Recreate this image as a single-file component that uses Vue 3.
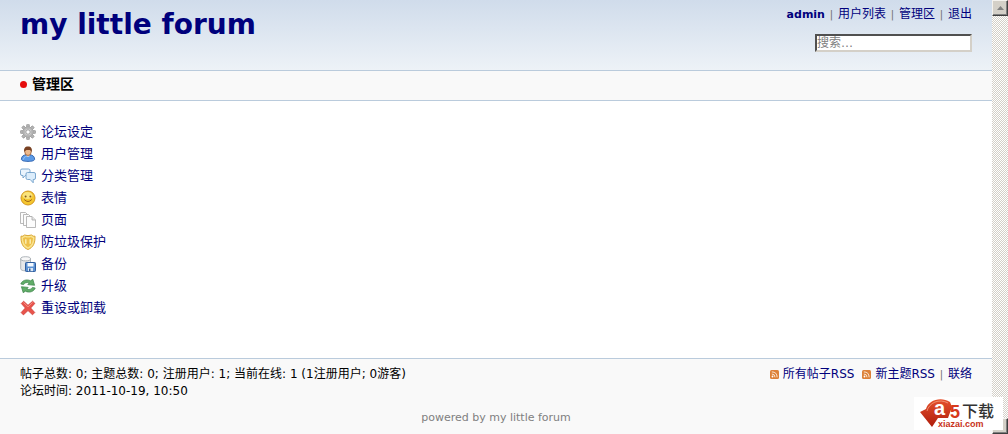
<script setup>
import { ref } from 'vue'

const search = ref('')
const menu = [
  { icon: 'gear', label: '论坛设定' },
  { icon: 'user', label: '用户管理' },
  { icon: 'chat', label: '分类管理' },
  { icon: 'smile', label: '表情' },
  { icon: 'pages', label: '页面' },
  { icon: 'shield', label: '防垃圾保护' },
  { icon: 'backup', label: '备份' },
  { icon: 'update', label: '升级' },
  { icon: 'cross', label: '重设或卸载' },
]
const feeds = ['所有帖子RSS', '新主题RSS']
const teeth = [0, 45, 90, 135, 180, 225, 270, 315]
</script>

<template>
  <div class="window">
    <div class="page">
      <header class="top">
        <h1><a href="#">my little forum</a></h1>
        <div class="tools">
          <nav class="usernav">
            <a href="#" class="me">admin</a><i>|</i><a href="#">用户列表</a><i>|</i><a href="#">管理区</a><i>|</i><a href="#">退出</a>
          </nav>
          <form @submit.prevent>
            <input v-model="search" type="text" placeholder="搜索…" aria-label="搜索" />
          </form>
        </div>
      </header>

      <div class="subnav">
        <span class="dot"></span>
        <h2>管理区</h2>
      </div>

      <main>
        <ul class="menu">
          <li v-for="item in menu" :key="item.icon">
            <a href="#">
              <svg viewBox="0 0 16 16" width="16" height="16" aria-hidden="true">
                <g v-if="item.icon === 'gear'">
                  <rect v-for="a in teeth" :key="a" x="6.6" y="0.4" width="2.8" height="4" rx="0.6" fill="#b4b4b4" stroke="#8c8c8c" stroke-width="0.6" :transform="`rotate(${a} 8 8)`" />
                  <circle cx="8" cy="8" r="5.2" fill="#bcbcbc" stroke="#999" stroke-width="0.6" />
                  <circle cx="8" cy="8" r="3.8" fill="#d6d6d6" stroke="#a2a2a2" stroke-width="0.6" />
                  <circle cx="8" cy="8" r="2.2" fill="#fff" stroke="#8a8a8a" stroke-width="0.8" />
                </g>
                <g v-else-if="item.icon === 'user'">
                  <path d="M1.4 13.2C1.4 10.4 3.4 9 6 8.8h4c2.6.2 4.6 1.6 4.6 4.4 0 1.5-2.8 2.2-6.6 2.2s-6.6-.7-6.6-2.2z" fill="#5b9ae6" stroke="#2c5fa9" stroke-width="0.9" />
                  <path d="M3.5 13.5c.2-1.8 1.3-2.9 3-3.2h3" fill="none" stroke="#9cc6f8" stroke-width="1" />
                  <path d="M6 8.8h4L8 11z" fill="#f6d5b5" />
                  <ellipse cx="8" cy="5.6" rx="3.3" ry="3.9" fill="#edb98c" stroke="#8b4d24" stroke-width="0.7" />
                  <path d="M4.3 6C3.5 2.6 5 .6 8 .6s4.5 2 3.7 5.4C11 4.5 10.5 3.9 9.2 3.9c-1.700.1-3.700-.5-4.900 2.100z" fill="#784122" />
                </g>
                <g v-else-if="item.icon === 'chat'" stroke="#6f9fc9" stroke-width="0.9" stroke-linejoin="round">
                  <path d="M2 1h6.500q1.500 0 1.500 1.500v3.500q0 1.500-1.500 1.500H5.200L3 10V7.500H2Q.5 7.500.5 6V2.500Q.5 1 2 1z" fill="#eaf4fd" />
                  <path d="M7.500 4.500H14q1.500 0 1.500 1.500v4q0 1.500-1.500 1.500h-.8V14.800L10.200 11.500H7.500Q6 11.500 6 10V6q0-1.500 1.500-1.500z" fill="#dcedfb" />
                </g>
                <g v-else-if="item.icon === 'smile'">
                  <circle cx="8" cy="8" r="7" fill="#f4c62f" stroke="#d49720" />
                  <ellipse cx="7.5" cy="5.5" rx="5" ry="3.5" fill="#fae47c" />
                  <circle cx="5.6" cy="6.5" r="1" fill="#88591a" />
                  <circle cx="10.4" cy="6.5" r="1" fill="#88591a" />
                  <path d="M4.2 9.5q3.8 4 7.600 0" fill="none" stroke="#9c641b" stroke-width="1" />
                </g>
                <g v-else-if="item.icon === 'pages'" fill="#fcfcfc" stroke="#a8a8a8" stroke-width="0.8">
                  <path d="M.5.5h5L8 3v8.500H.5z" />
                  <path d="M3.500 2.500h5L11 5v8.500H3.500z" />
                  <path d="M6.500 4.500h5.500L15.500 8v7.500h-9z" />
                  <path d="M12 4.500V8h3.500" fill="#e4e4e4" />
                </g>
                <g v-else-if="item.icon === 'shield'">
                  <path d="M1 2.200Q3 2.800 4.500 1 8 2.400 11.500 1 13 2.800 15 2.200C15.300 9 13.200 13.500 8 15.500 2.800 13.500.7 9 1 2.200z" fill="#fae48e" stroke="#d9a530" />
                  <path d="M3 4q1.200 0 2-1Q8 4 11 3q.8 1 2 1 .1 6.500-5 9.200Q2.900 10.500 3 4z" fill="#eec04a" />
                  <path d="M5.800 5.200v4.600M10.200 5.200v4.600" stroke="#fbf0b8" stroke-width="1.4" />
                </g>
                <g v-else-if="item.icon === 'backup'">
                  <path d="M.7 2.800v10c0 1.200 2 2 4.800 2s5-.8 5-2v-10z" fill="#e5e7e9" stroke="#9ca3aa" stroke-width="0.8" />
                  <ellipse cx="5.6" cy="2.8" rx="4.9" ry="2.1" fill="#f8f8f8" stroke="#9ca3aa" stroke-width="0.8" />
                  <rect x="5.5" y="6.5" width="10" height="9" rx="0.8" fill="#5c91d3" stroke="#2e5d9d" />
                  <path d="M7.500 7h6v3.500h-6z" fill="#f5faff" />
                  <path d="M8 12h5v3.200H8z" fill="#dce8f5" />
                  <path d="M9 12.500h1.500v2.500H9z" fill="#315d98" />
                </g>
                <g v-else-if="item.icon === 'update'" fill="#61ad68" stroke="#398047" stroke-width="0.7" stroke-linejoin="round">
                  <path d="M.8 6C2 2.400 6.600.8 10.600 2.800L12.800 1.300 14.600 7.300 7.800 6.600 9.200 5C6.800 4 4.600 4.600 3.600 6.600z" />
                  <path d="M15.200 10C14 13.600 9.400 15.200 5.400 13.200L3.200 14.700 1.400 8.700 8.200 9.400 6.800 11C9.200 12 11.400 11.400 12.400 9.400z" />
                </g>
                <g v-else>
                  <path d="M3.600 1.200 8 5.300l4.600-4.100 2.300 2.200L10.700 8l4.100 4.500-2.300 2.300L8 10.600 3.400 14.900 1.100 12.600 5.300 8 1.300 3.500z" fill="#e9544b" stroke="#c93532" stroke-width="0.7" stroke-linejoin="round" />
                  <path d="M3.500 2.500 8 6.800l4.600-4.300" fill="none" stroke="#f6948b" stroke-width="0.9" />
                </g>
              </svg>
              <span>{{ item.label }}</span>
            </a>
          </li>
        </ul>
      </main>

      <footer>
        <div class="row">
          <p>帖子总数: 0; 主题总数: 0; 注册用户: 1; 当前在线: 1 (1注册用户; 0游客)<br />论坛时间: 2011-10-19, 10:50</p>
          <nav class="feeds">
            <a v-for="f in feeds" :key="f" href="#" class="feed">
              <svg viewBox="0 0 9 9" width="9" height="9" aria-hidden="true">
                <rect width="9" height="9" rx="1.5" fill="#dd8138" />
                <circle cx="2.5" cy="6.5" r="0.9" fill="#fff" />
                <path d="M1.800 4Q5 4 5 7.300M1.800 1.900Q7.100 1.900 7.100 7.300" fill="none" stroke="#fbe5d0" />
              </svg>{{ f }}</a><i>|</i><a href="#">联络</a>
          </nav>
        </div>
        <a href="#" class="powered">powered by my little forum</a>
      </footer>
    </div>

    <div class="scroll" aria-hidden="true">
      <span class="btn"><svg viewBox="0 0 7 4" width="7" height="4"><path d="M0 4 3.500 0 7 4z" fill="#808080" /></svg></span>
      <span class="btn"></span>
    </div>

    <svg class="mark" viewBox="0 0 89 33" width="89" height="33" role="img" aria-label="a5下载 xiazai.com">
      <defs>
        <linearGradient id="red" x1="0" y1="0" x2="0" y2="1">
          <stop offset="0" stop-color="#e5502c" />
          <stop offset="1" stop-color="#ae1d0c" />
        </linearGradient>
      </defs>
      <rect width="89" height="33" fill="#fff" />
      <path d="M6 15 12 12C14 4 26-1 36 5L38 10 34 21H24L18 30z" fill="url(#red)" />
      <path d="M13 14C15 6 25 1 34 6" fill="none" stroke="#f2a184" stroke-width="0.8" />
      <text x="20" y="18" class="a">a</text>
      <text x="36" y="21" class="five">5</text>
      <text x="48" y="20" class="cn">下载</text>
      <text x="24" y="30" class="domain">xiazai.com</text>
    </svg>
  </div>
</template>

<style>
body {
  margin: 0;
  background: #fff;
}
</style>

<style scoped>
.window {
  position: relative;
  display: flex;
  min-height: 100vh;
  font: 12px/17px "DejaVu Sans", "Noto Sans CJK SC", sans-serif;
  color: #000;
}
.page {
  flex: 1;
  min-width: 0;
  display: flex;
  flex-direction: column;
}
a {
  color: #00007c;
  text-decoration: none;
}
.top {
  box-sizing: border-box;
  min-height: 71px;
  padding: 6px 20px;
  display: flex;
  justify-content: space-between;
  border-bottom: 1px solid #bacbdc;
  background: linear-gradient(#d0dceb, #edf2f7);
}
h1 {
  margin: 0;
  font: bold 28px/38px "DejaVu Sans", sans-serif;
}
.tools {
  display: flex;
  flex-direction: column;
  align-items: flex-end;
  gap: 11px;
}
.usernav,
.feeds {
  display: flex;
  align-items: flex-start;
  white-space: nowrap;
}
.me {
  font-size: 11px;
  font-weight: bold;
}
i {
  width: 13px;
  text-align: center;
  font-style: normal;
  font-size: 10px;
  color: #707070;
}
form {
  display: flex;
}
input {
  box-sizing: border-box;
  width: 157px;
  height: 18px;
  padding: 0;
  border: 2px solid;
  border-color: #505050 #d4d0c8 #d4d0c8 #505050;
  background: #fff;
  font: 12px "DejaVu Sans", "Noto Sans CJK SC", sans-serif;
}
input::placeholder {
  color: #808080;
  opacity: 1;
}
.subnav {
  display: flex;
  align-items: center;
  gap: 5px;
  padding: 5px 20px 7px;
  border-bottom: 1px solid #bacbdc;
  background: #f9f9f9;
}
.dot {
  width: 7px;
  height: 7px;
  border-radius: 50%;
  background: #e60d0d;
}
h2 {
  margin: 0;
  font-size: 14px;
  line-height: 17px;
}
main {
  flex: 1;
  padding: 20px 20px 36px;
}
.menu {
  margin: 0;
  padding: 0;
  list-style: none;
  font-size: 13px;
  line-height: 22px;
}
.menu a {
  display: inline-flex;
  align-items: center;
  gap: 5px;
}
.menu li {
  height: 22px;
}
footer {
  padding: 7px 20px 8px;
  border-top: 1px solid #bacbdc;
  background: #f9f9f9;
}
.row {
  display: flex;
  justify-content: space-between;
}
p {
  margin: 0;
}
.feed {
  display: flex;
  align-items: center;
  gap: 4px;
}
.feed + .feed {
  margin-left: 8px;
}
.powered {
  display: block;
  margin-top: 9px;
  text-align: center;
  font-size: 11px;
  color: #808080;
}
.scroll {
  width: 16px;
  display: flex;
  flex-direction: column;
  justify-content: space-between;
  background: repeating-conic-gradient(#d4d0c8 0 25%, #fff 0 50%) 0 0 / 2px 2px;
}
.btn {
  box-sizing: border-box;
  height: 16px;
  display: flex;
  align-items: center;
  justify-content: center;
  border: 1px solid;
  border-color: #f4f2ee #404040 #404040 #f4f2ee;
  box-shadow: inset -1px -1px #808080;
  background: #d4d0c8;
}
.mark {
  position: absolute;
  right: 5px;
  bottom: 4px;
}
.a {
  font: bold 20px "Liberation Sans", sans-serif;
  fill: #fff;
}
.five {
  font: bold 18px "Liberation Sans", sans-serif;
  fill: #d73a1c;
}
.cn {
  font: 500 16px "Noto Sans CJK SC", sans-serif;
  fill: #333;
}
.domain {
  font: bold 9px "Liberation Sans", sans-serif;
  fill: #c8321a;
}
</style>
